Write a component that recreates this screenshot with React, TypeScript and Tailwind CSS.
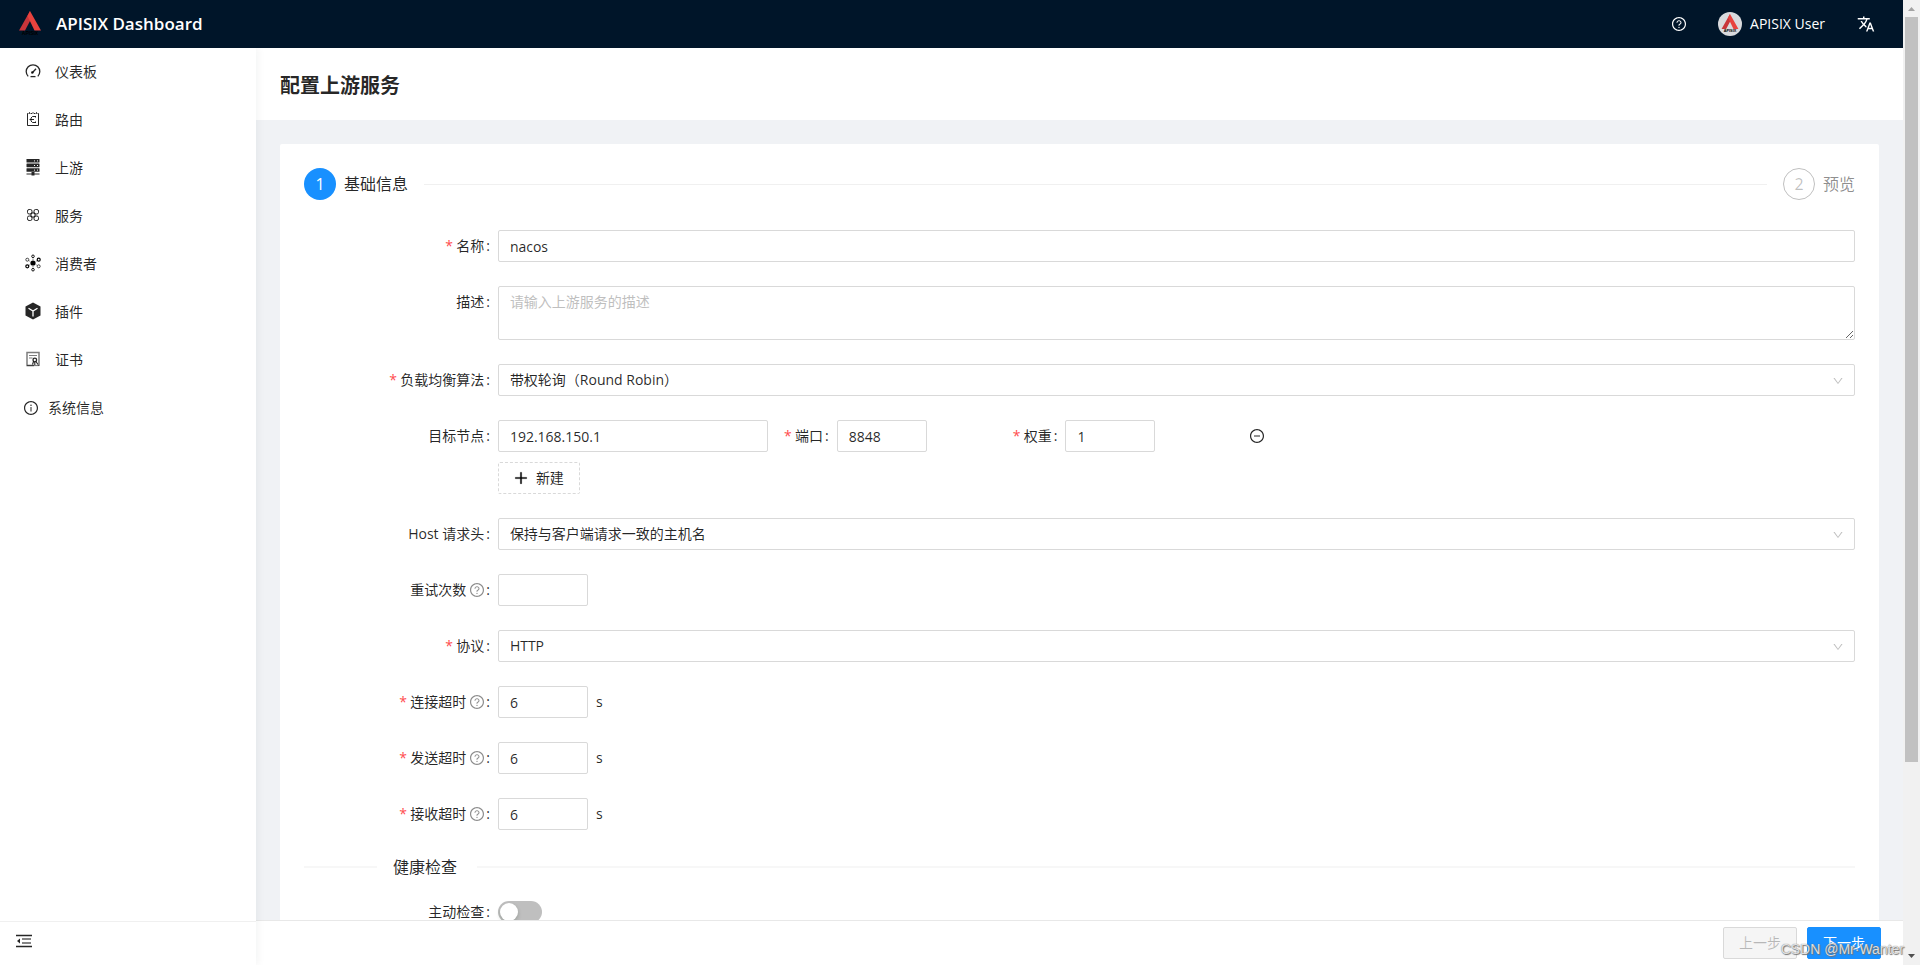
import type { ReactNode } from 'react';
import {
    AiOutlineDown,
    AiOutlineInfoCircle,
    AiOutlineMinusCircle,
    AiOutlinePlus,
    AiOutlineQuestionCircle,
} from 'react-icons/ai';
import { MdTranslate } from 'react-icons/md';

// trims the built-in padding of the Ant icons
const ANT_BOX = '64 64 896 896';

function LogoMark({ className }: { className?: string }) {
    return (
        <svg viewBox="0 0 28 26" className={className} aria-hidden="true">
            <path d="M14 0L3 19.5h6L14 10z" fill="#c9353a" />
            <path d="M14 0l11 19.500h-6.500L11.500 5z" fill="#e8433e" />
            <text
                x="14"
                y="24"
                textAnchor="middle"
                fontSize="5"
                fontWeight="700"
                fontFamily="Liberation Sans, sans-serif"
                fill="#000"
            >
                APISIX
            </text>
        </svg>
    );
}

function DashboardIcon() {
    return (
        <svg viewBox="0 0 16 16" className="h-4 w-4" fill="none" stroke="currentColor" aria-hidden="true">
            <path d="M3.2 13.4a6.8 6.8 0 1 1 9.6 0" strokeWidth="1.3" />
            <path d="M5.5 13.6h5" strokeWidth="1.3" />
            <path d="M7.300 9.800L11 5.800" strokeWidth="1.3" />
            <circle cx="7.300" cy="9.500" r="1.300" fill="currentColor" stroke="none" />
        </svg>
    );
}

function RouteIcon() {
    return (
        <svg viewBox="0 0 16 16" className="h-4 w-4" fill="none" stroke="currentColor" aria-hidden="true">
            <path d="M3.5 2.5h-1v12h11v-12h-1M5.5 2.5h1.5M9 2.5h1.5" />
            <path d="M4.5 1v2M8 1v2M11.5 1v2" strokeWidth="0.8" />
            <path d="M10.5 5.5h-3L6 7v3l1.5 1.5h3M4.5 8.500H9M10.5 5v1.5M10.5 10.5V12" />
        </svg>
    );
}

function UpstreamIcon() {
    return (
        <svg viewBox="0 0 16 18" className="h-[18px] w-4" fill="currentColor" aria-hidden="true">
            <rect x="1.5" y="1" width="13" height="3.6" rx="0.4" />
            <rect x="1.5" y="5.600" width="13" height="3.6" rx="0.4" />
            <rect x="1.5" y="10.200" width="13" height="3.6" rx="0.4" />
            <path d="M1.5 15.5h5V14h3v1.5h5v1h-5v1h-3v-1h-5z" />
            <g fill="#fff">
                <rect x="9" y="2.4" width="1" height="1" />
                <rect x="12" y="2.4" width="1" height="1" />
                <rect x="9" y="7" width="1" height="1" />
                <rect x="12" y="7" width="1" height="1" />
                <rect x="9" y="11.600" width="1" height="1" />
                <rect x="12" y="11.600" width="1" height="1" />
            </g>
        </svg>
    );
}

function ServiceIcon() {
    return (
        <svg viewBox="0 0 16 16" className="h-4 w-4" fill="none" stroke="currentColor" aria-hidden="true">
            <rect x="2.5" y="2.5" width="4.5" height="4.5" rx="1.6" />
            <rect x="9" y="2.5" width="4.5" height="4.5" rx="1.6" />
            <rect x="2.5" y="9" width="4.5" height="4.5" rx="1.6" />
            <rect x="9" y="9" width="4.5" height="4.5" rx="1.6" />
            <path d="M5 7h2V5M9 5v2h2M5 9h2v2M11 9H9v2" />
        </svg>
    );
}

function ConsumerIcon() {
    return (
        <svg viewBox="0 0 16 18" className="h-[18px] w-4" fill="none" stroke="#000" aria-hidden="true">
            <circle cx="8" cy="9" r="2.600" fill="#000" stroke="none" />
            <circle cx="8" cy="2.3" r="1.3" strokeWidth="0.9" />
            <circle cx="8" cy="15.7" r="1.3" strokeWidth="0.9" />
            <circle cx="2.3" cy="5.7" r="1.5" strokeWidth="0.7" />
            <circle cx="13.7" cy="5.7" r="1.5" strokeWidth="1.2" />
            <circle cx="2.3" cy="12.3" r="1.5" strokeWidth="1.2" />
            <circle cx="13.7" cy="12.3" r="1.5" strokeWidth="0.7" />
            <path
                d="M8 4.500V6M8 12v1.500M4.200 6.800l1 .6M11.800 6.800l-1 .6M4.200 11.200l1-.6M11.800 11.200l-1-.6"
                strokeWidth="0.5"
            />
        </svg>
    );
}

function PluginIcon() {
    return (
        <svg viewBox="0 0 16 18" className="h-[18px] w-4" aria-hidden="true">
            <path d="M8 .5l7.5 4v9L8 17.5l-7.5-4v-9z" fill="currentColor" />
            <path d="M3.5 6.300L8 9l4.500-2.700M8 9v5.500" fill="none" stroke="#fff" strokeWidth="1.3" />
        </svg>
    );
}

function CertificateIcon() {
    return (
        <svg viewBox="0 0 16 16" className="h-4 w-4" fill="none" stroke="currentColor" aria-hidden="true">
            <path d="M9 14.5H2v-13h12V15" strokeWidth="1.5" strokeOpacity="0.6" />
            <path d="M2 14.5h12" strokeWidth="1.2" strokeOpacity="0.6" />
            <path d="M4 4.5h8M4 7h3.5" strokeOpacity="0.6" />
            <circle cx="9.8" cy="9" r="1.8" strokeWidth="1.3" />
            <path d="M8.500 10.500l-1 3M11 10.500l2 3M9.800 11v3" strokeWidth="1.1" />
        </svg>
    );
}

function FoldIcon() {
    return (
        <svg viewBox="0 0 16 16" className="h-4 w-4" fill="none" stroke="currentColor" aria-hidden="true">
            <path d="M0 2.5h16M0 13.5h16" strokeWidth="1.3" />
            <path d="M6 6h9M6 10h9" strokeWidth="1.3" strokeOpacity="0.75" />
            <path d="M1 8l3-2.500v5z" fill="currentColor" stroke="none" />
        </svg>
    );
}

const menu: { label: string; icon: ReactNode }[] = [
    { label: '仪表板', icon: <DashboardIcon /> },
    { label: '路由', icon: <RouteIcon /> },
    { label: '上游', icon: <UpstreamIcon /> },
    { label: '服务', icon: <ServiceIcon /> },
    { label: '消费者', icon: <ConsumerIcon /> },
    { label: '插件', icon: <PluginIcon /> },
    { label: '证书', icon: <CertificateIcon /> },
];

const timeouts = [
    { id: 'connect', label: '连接超时' },
    { id: 'send', label: '发送超时' },
    { id: 'read', label: '接收超时' },
];

const inputClass = 'h-8 rounded-xs border border-[#d9d9d9] bg-white px-[11px] outline-none focus:border-[#40a9ff]';

interface LabelProps {
    htmlFor: string;
    children: ReactNode;
    required?: boolean;
    tip?: boolean;
}

function Label({ htmlFor, children, required, tip }: LabelProps) {
    return (
        <label htmlFor={htmlFor} className="flex h-8 shrink-0 items-center whitespace-nowrap">
            {required && <span className="mr-1 w-[7px] text-center text-[#ff4d4f]">*</span>}
            {children}
            {tip && <AiOutlineQuestionCircle viewBox={ANT_BOX} className="ml-1 h-3.5 w-3.5 text-black/45" />}
            <span className="mr-2 ml-0.5">:</span>
        </label>
    );
}

function Field({ text, children, ...label }: LabelProps & { text: string }) {
    return (
        <div className="mb-6 flex">
            <div className="flex w-1/8 shrink-0 justify-end">
                <Label {...label}>{text}</Label>
            </div>
            <div className="min-w-0 flex-1">{children}</div>
        </div>
    );
}

function Select({ id, value }: { id: string; value: string }) {
    return (
        <div className="relative">
            <select id={id} className={`${inputClass} w-full appearance-none`} defaultValue={value}>
                <option value={value}>{value}</option>
            </select>
            <AiOutlineDown className="pointer-events-none absolute top-[11px] right-[11px] h-3 w-3 text-black/25" />
        </div>
    );
}

function Sidebar() {
    return (
        <aside className="z-10 flex w-64 shrink-0 flex-col bg-white shadow-[2px_0_8px_0_rgba(29,35,41,0.05)]">
            <nav className="flex-1 pt-1">
                <ul>
                    {menu.map((item) => (
                        <li key={item.label} className="mb-2">
                            <a href="#" className="flex h-10 items-center gap-3.5 pl-[25px]">
                                <span className="flex h-10 w-4 items-center pb-[3px]">{item.icon}</span>
                                {item.label}
                            </a>
                        </li>
                    ))}
                    <li>
                        <a href="#" className="flex h-10 items-center gap-2.5 pl-6">
                            <AiOutlineInfoCircle viewBox={ANT_BOX} className="h-3.5 w-3.5" />
                            系统信息
                        </a>
                    </li>
                </ul>
            </nav>
            <div className="flex h-11 items-center border-t border-[#f0f0f0] px-4 pb-1.5">
                <button type="button" aria-label="收起菜单">
                    <FoldIcon />
                </button>
            </div>
        </aside>
    );
}

function UpstreamForm() {
    return (
        <form>
            <Field htmlFor="name" text="名称" required>
                <input id="name" type="text" defaultValue="nacos" className={`${inputClass} w-full`} />
            </Field>
            <Field htmlFor="desc" text="描述">
                <textarea
                    id="desc"
                    placeholder="请输入上游服务的描述"
                    className="block h-[54px] w-full resize-y rounded-xs border border-[#d9d9d9] bg-white px-[11px] py-1 leading-[22px] outline-none placeholder:text-[#bfbfbf]"
                />
            </Field>
            <Field htmlFor="type" text="负载均衡算法" required>
                <Select id="type" value="带权轮询（Round Robin）" />
            </Field>
            <Field htmlFor="host" text="目标节点">
                <div className="-mx-2 grid grid-cols-24">
                    <div className="col-span-5 px-2">
                        <input id="host" type="text" defaultValue="192.168.150.1" className={`${inputClass} w-full`} />
                    </div>
                    <div className="col-span-4 flex px-2">
                        <Label htmlFor="port" required>
                            端口
                        </Label>
                        <input id="port" type="text" defaultValue="8848" className={`${inputClass} w-[90px]`} />
                    </div>
                    <div className="col-span-4 flex px-2">
                        <Label htmlFor="weight" required>
                            权重
                        </Label>
                        <input id="weight" type="text" defaultValue="1" className={`${inputClass} w-[90px]`} />
                    </div>
                    <div className="col-span-4 flex items-center px-4">
                        <button type="button" aria-label="删除节点">
                            <AiOutlineMinusCircle viewBox={ANT_BOX} className="h-3.5 w-3.5" />
                        </button>
                    </div>
                </div>
                <button
                    type="button"
                    className="mt-2.5 flex h-8 items-center gap-2 rounded-xs border border-dashed border-[#d9d9d9] px-[15px]"
                >
                    <AiOutlinePlus viewBox={ANT_BOX} className="h-3.5 w-3.5 stroke-[40]" />
                    新建
                </button>
            </Field>
            <Field htmlFor="pass-host" text="Host 请求头">
                <Select id="pass-host" value="保持与客户端请求一致的主机名" />
            </Field>
            <Field htmlFor="retries" text="重试次数" tip>
                <input id="retries" type="text" className={`${inputClass} w-[90px]`} />
            </Field>
            <Field htmlFor="scheme" text="协议" required>
                <Select id="scheme" value="HTTP" />
            </Field>
            {timeouts.map((item) => (
                <Field key={item.id} htmlFor={item.id} text={item.label} required tip>
                    <div className="flex items-center gap-2">
                        <input id={item.id} type="text" defaultValue="6" className={`${inputClass} w-[90px]`} />
                        <span>s</span>
                    </div>
                </Field>
            ))}

            <div className="mb-4 flex items-center">
                <span className="h-0.5 w-[73px] bg-[#f7f7f7]" />
                <h3 className="mr-5 ml-4 text-base leading-[26px]">健康检查</h3>
                <span className="h-0.5 flex-1 bg-[#f7f7f7]" />
            </div>

            <Field htmlFor="active-check" text="主动检查">
                <div className="flex h-8 items-center">
                    <input
                        id="active-check"
                        type="checkbox"
                        role="switch"
                        className="h-[22px] w-11 appearance-none rounded-full bg-[#bfbfbf] p-0.5 before:block before:h-[18px] before:w-[18px] before:rounded-full before:bg-white before:shadow-[0_2px_4px_0_rgba(0,35,11,0.2)] checked:bg-[#1890ff] checked:before:ml-[22px]"
                    />
                </div>
            </Field>
        </form>
    );
}

function Scrollbar() {
    return (
        <div className="flex w-[17px] shrink-0 flex-col items-center bg-[#f1f1f1]" aria-hidden="true">
            <svg viewBox="0 0 17 17" className="h-[17px] w-[17px] shrink-0">
                <path d="M5 11l3.500-4 3.500 4z" fill="#a3a3a3" />
            </svg>
            <div className="flex min-h-0 w-[13px] flex-1 flex-col">
                <div className="h-4/5 bg-[#c1c1c1]" />
            </div>
            <svg viewBox="0 0 17 17" className="h-[17px] w-[17px] shrink-0">
                <path d="M5 6l3.500 4L12 6z" fill="#505050" />
            </svg>
        </div>
    );
}

export default function App() {
    return (
        <div className="relative flex h-screen overflow-hidden font-['Open_Sans','Noto_Sans_CJK_SC',sans-serif] text-sm leading-[22px] text-black/85">
            <div className="flex min-w-0 flex-1 flex-col">
                <header className="z-20 flex h-12 shrink-0 items-center justify-between bg-[#001529] pr-7 pl-4 text-white">
                    <a href="#" className="flex items-center gap-3">
                        <LogoMark className="h-[26px] w-7" />
                        <h1 className="text-[17px] leading-8 font-semibold">APISIX Dashboard</h1>
                    </a>
                    <div className="flex items-center">
                        <button type="button" aria-label="帮助" className="mr-8">
                            <AiOutlineQuestionCircle viewBox={ANT_BOX} className="h-3.5 w-3.5" />
                        </button>
                        <button type="button" className="mr-8 flex items-center gap-2">
                            <span className="flex h-6 w-6 items-center justify-center overflow-hidden rounded-full bg-[#d9dadd]">
                                <LogoMark className="h-5 w-6" />
                            </span>
                            APISIX User
                        </button>
                        <button type="button" aria-label="语言">
                            <MdTranslate className="h-[18px] w-[18px]" />
                        </button>
                    </div>
                </header>

                <div className="flex min-h-0 flex-1">
                    <Sidebar />
                    <div className="flex min-w-0 flex-1 flex-col bg-[#f0f2f5]">
                        <main className="min-h-0 flex-1 overflow-hidden">
                            <div className="flex h-[72px] items-center bg-white px-6 pt-[3px]">
                                <h2 className="text-xl leading-8 font-bold">配置上游服务</h2>
                            </div>
                            <section className="m-6 rounded-xs bg-white p-6">
                                <ol className="mb-[30px] flex items-center gap-4 text-base leading-8">
                                    <li className="flex items-center gap-2">
                                        <span className="flex h-8 w-8 items-center justify-center rounded-full bg-[#1890ff] text-white">
                                            1
                                        </span>
                                        基础信息
                                    </li>
                                    <li className="h-px flex-1 bg-[#f0f0f0]" aria-hidden="true" />
                                    <li className="flex items-center gap-2 text-black/45">
                                        <span className="flex h-8 w-8 items-center justify-center rounded-full border border-black/25 text-black/25">
                                            2
                                        </span>
                                        预览
                                    </li>
                                </ol>
                                <UpstreamForm />
                            </section>
                        </main>
                        <footer className="flex h-[45px] shrink-0 items-center justify-end gap-2.5 border-t border-[#e8e8e8] bg-white pr-[22px]">
                            <button
                                type="button"
                                disabled
                                className="h-8 rounded-xs border border-[#d9d9d9] bg-[#f5f5f5] px-[15px] text-black/25"
                            >
                                上一步
                            </button>
                            <button type="button" className="h-8 rounded-xs border border-[#1890ff] bg-[#1890ff] px-[15px] text-white">
                                下一步
                            </button>
                        </footer>
                    </div>
                </div>
            </div>
            <Scrollbar />
            <span className="pointer-events-none absolute right-4 bottom-[5px] z-30 font-['Liberation_Sans',sans-serif] text-white/80 [text-shadow:0_0_1px_#555,1px_1px_1px_#777]">
                CSDN @Mr·Wanter
            </span>
        </div>
    );
}
